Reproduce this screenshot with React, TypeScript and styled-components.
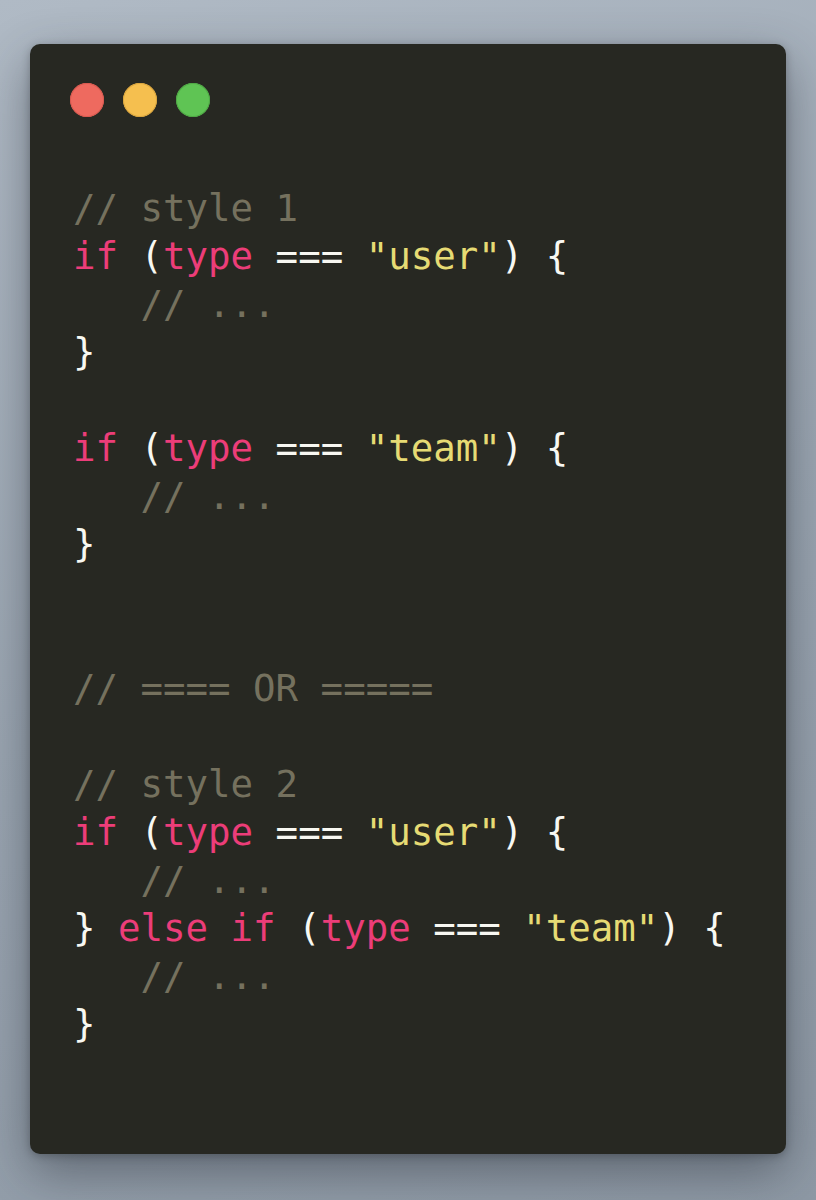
import React from "react";
import styled, { createGlobalStyle } from "styled-components";

const Global = createGlobalStyle`
  html, body { margin: 0; padding: 0; }
  body { background: #9aa5b1; }
`;

const Page = styled.div`
  width: 816px;
  height: 1200px;
  box-sizing: border-box;
  padding: 44px 30px 46px 30px;
  background: linear-gradient(160deg, #b0bac5 0%, #9ba6b2 50%, #8e99a5 100%);
  display: flex;
`;

const Window = styled.div`
  flex: 1;
  background: #272822;
  border-radius: 10px;
  box-shadow: 0 18px 50px rgba(30, 36, 44, 0.45), 0 2px 8px rgba(0, 0, 0, 0.25);
  padding: 39px 40px 0 43px;
  display: flex;
  flex-direction: column;
  gap: 67px;
`;

const Lights = styled.div`
  display: flex;
  gap: 19px;
  margin-left: -3px;
`;

const Light = styled.span<{ $c: string; $b: string }>`
  width: 34px;
  height: 34px;
  border-radius: 50%;
  background: ${(p) => p.$c};
  box-shadow: inset 0 0 0 1px ${(p) => p.$b};
`;

const Code = styled.pre`
  margin: 0;
  font-family: "DejaVu Sans Mono", monospace;
  font-size: 37.4px;
  line-height: 48px;
  color: #f8f8f2;
  white-space: pre;
`;

const Tok = styled.span<{ $k: "c" | "k" | "s" | "p" }>`
  color: ${(p) =>
    p.$k === "c" ? "#75715e" : p.$k === "k" ? "#ec3d79" : p.$k === "s" ? "#e6db74" : "#f8f8f2"};
`;

type T = [string, "c" | "k" | "s" | "p"];

const C = (s: string): T => [s, "c"];
const K = (s: string): T => [s, "k"];
const S = (s: string): T => [s, "s"];
const P = (s: string): T => [s, "p"];

const ifLine = (w: string): T[] => [K("if"), P(" ("), K("type"), P(" === "), S(`"${w}"`), P(") {")];

const lines: T[][] = [
  [C("// style 1")],
  ifLine("user"),
  [C("   // ...")],
  [P("}")],
  [],
  ifLine("team"),
  [C("   // ...")],
  [P("}")],
  [],
  [],
  [C("// ==== OR =====")],
  [],
  [C("// style 2")],
  ifLine("user"),
  [C("   // ...")],
  [P("} "), K("else if"), P(" ("), K("type"), P(" === "), S('"team"'), P(") {")],
  [C("   // ...")],
  [P("}")],
];

export default function App() {
  return (
    <>
      <Global />
      <Page>
        <Window>
          <Lights>
            <Light $c="#ee6a5f" $b="#d85a50" />
            <Light $c="#f5bf4f" $b="#d9a53e" />
            <Light $c="#5fc454" $b="#4fa845" />
          </Lights>
          <Code>
            {lines.map((l, i) => (
              <div key={i}>
                {l.length === 0 ? " " : l.map(([t, k], j) => (
                  <Tok key={j} $k={k}>
                    {t}
                  </Tok>
                ))}
              </div>
            ))}
          </Code>
        </Window>
      </Page>
    </>
  );
}
